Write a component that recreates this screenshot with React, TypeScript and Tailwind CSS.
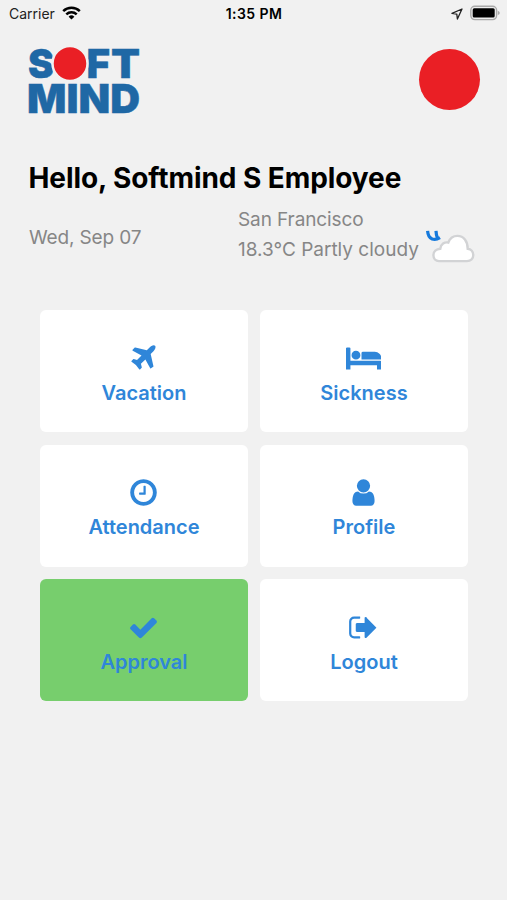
type Tile = {
    label: string;
    icon: string;
    width?: number;
    active?: boolean;
};

// icon outlines are drawn on a 1792 grid, the bed is wider than the others
const tiles: Tile[] = [
    {
        label: "Vacation",
        icon: "M1568 160q44 52 12 148t-108 172l-161 161 160 696q5 19-12 33l-128 96q-7 6-19 6-4 0-7-1-15-3-21-16l-279-508-259 259 53 194q5 17-8 31l-96 96q-9 9-23 9h-2q-15-2-24-13l-189-252-252-189q-11-7-13-23-1-13 9-25l96-97q9-9 23-9 6 0 8 1l194 53 259-259-508-279q-14-8-17-24-2-16 9-27l128-128q14-13 30-8l665 159 160-160q76-76 172-108t148 12z",
    },
    {
        label: "Sickness",
        icon: "M256 1024h1728q26 0 45 19t19 45v448h-256v-256h-1536v256h-256v-1216q0-26 19-45t45-19h128q26 0 45 19t19 45v704zm576-320q0-106-75-181t-181-75-181 75-75 181 75 181 181 75 181-75 75-181zm1216 256v-64q0-159-112.5-271.5t-271.5-112.5h-704q-26 0-45 19t-19 45v384h1152z",
        width: 2048,
    },
    {
        label: "Attendance",
        icon: "M1024 544v448q0 14-9 23t-23 9h-320q-14 0-23-9t-9-23v-64q0-14 9-23t23-9h224v-352q0-14 9-23t23-9h64q14 0 23 9t9 23zm416 352q0-148-73-273t-198-198-273-73-273 73-198 198-73 273 73 273 198 198 273 73 273-73 198-198 73-273zm224 0q0 209-103 385.5t-279.5 279.5-385.5 103-385.5-103-279.5-279.5-103-385.5 103-385.5 279.5-279.5 385.5-103 385.5 103 279.5 279.5 103 385.5z",
    },
    {
        label: "Profile",
        icon: "M1536 1399q0 109-62.5 187t-150.5 78h-854q-88 0-150.5-78t-62.5-187q0-85 8.5-160.5t31.5-152 58.5-131 94-89 134.5-34.5q131 128 313 128t313-128q76 0 134.5 34.5t94 89 58.5 131 31.5 152 8.5 160.5zm-256-887q0 159-112.5 271.5t-271.5 112.5-271.5-112.5-112.5-271.5 112.5-271.5 271.5-112.5 271.5 112.5 112.5 271.5z",
    },
    {
        label: "Approval",
        icon: "M1671 566q0 40-28 68l-724 724-136 136q-28 28-68 28t-68-28l-136-136-362-362q-28-28-28-68t28-68l136-136q28-28 68-28t68 28l294 295 656-657q28-28 68-28t68 28l136 136q28 28 28 68z",
        active: true,
    },
    {
        label: "Logout",
        icon: "M704 1440q0 4 1 20t.5 26.5-3 23.5-10 19.5-20.5 6.5h-320q-119 0-203.5-84.5t-84.5-203.5v-704q0-119 84.5-203.5t203.5-84.5h320q13 0 22.5 9.5t9.5 22.5q0 4 1 20t.5 26.5-3 23.5-10 19.5-20.5 6.5h-320q-66 0-113 47t-47 113v704q0 66 47 113t113 47h312l11.5 1 11.5 3 8 5.5 7 9 2 13.5zm928-544q0 26-19 45l-544 544q-19 19-45 19t-45-19-19-45v-288h-448q-26 0-45-19t-19-45v-384q0-26 19-45t45-19h448v-288q0-26 19-45t45-19 45 19 19 45l544 544q19 19 19 45z",
    },
];

function StatusBar() {
    return (
        <div className="h-7 grid grid-cols-3 items-center pl-[9px] pr-[7px] text-sm text-black">
            <div className="flex items-center gap-[7px]">
                <span className="text-[#222]">Carrier</span>
                <svg className="-mt-[2px]" width="19" height="14" viewBox="0 0 19 14" fill="none" stroke="#000" strokeWidth="2.5">
                    <path d="M1.2 5.2a12 12 0 0 1 16.6 0" />
                    <path d="M4.3 8.4a7.5 7.5 0 0 1 10.4 0" />
                    <path d="M9.5 13.5 6.6 10.7a4.2 4.2 0 0 1 5.8 0z" fill="#000" stroke="none" />
                </svg>
            </div>
            <p className="text-center pr-px font-semibold tracking-[0.45px]">1:35 PM</p>
            <div className="flex items-center justify-end gap-[6px]">
                <svg width="12" height="12" viewBox="0 0 12 12" fill="none" stroke="#222" strokeWidth="1.3" strokeLinejoin="round">
                    <path d="M11 1 1 5.4l4.8.8.6 4.8z" />
                </svg>
                <svg className="-mt-[2px]" width="31" height="16" viewBox="0 0 31 16">
                    <rect x="1.8" y="1.2" width="25.8" height="13.4" rx="4" fill="#eee" stroke="#a9a9a9" strokeWidth="1.4" />
                    <rect x="3.7" y="3.3" width="22" height="9.3" rx="1.5" fill="#000" />
                    <path d="M28.8 5.7q2 .7 2 2.2t-2 2.2z" fill="#a9a9a9" />
                </svg>
            </div>
        </div>
    );
}

function Logo() {
    return (
        <svg
            className="overflow-visible"
            width="112"
            height="68"
            viewBox="0 0 112 68"
            fill="#1f68a5"
            stroke="#1f68a5"
            strokeWidth="0.4"
            fontWeight="900"
            fontSize="40"
        >
            <text x="0" y="31.5" textLength="26" lengthAdjust="spacingAndGlyphs">S</text>
            <text x="58.5" y="31.5" textLength="23.5" lengthAdjust="spacingAndGlyphs">F</text>
            <text x="83" y="31.5" textLength="29" lengthAdjust="spacingAndGlyphs">T</text>
            <text x="-1" y="67" textLength="113" lengthAdjust="spacingAndGlyphs">MIND</text>
            <circle cx="42" cy="17.5" r="17.5" fill="#ea1f25" stroke="#f1f1f1" strokeWidth="2.5" />
        </svg>
    );
}

function WeatherIcon() {
    return (
        <svg width="52" height="36" viewBox="0 0 52 36" fill="none">
            {/* bit of sun behind the cloud */}
            <path d="M3.6.8q.4 6.400 4.600 8.200 3.600 1.200 7.800-1.400M12 .8q.2 4 1.400 7.400" stroke="#1579dc" strokeWidth="3.2" />
            <path
                d="M15 31.100h28c3.800 0 6.300-2.600 6.300-6s-2.300-6-5.600-6.400c0-7.400-4-12.800-10.200-12.800-4.400 0-7.600 2.400-9.200 6.600-3.600-.8-7.600 1.600-8 6.200-4 .4-6.900 2.800-6.900 6.300 0 3.600 2.300 6.100 5.600 6.100z"
                fill="#fff"
                stroke="#d2d3d5"
                strokeWidth="2.4"
            />
        </svg>
    );
}

export default function App() {
    return (
        <div className="min-h-screen bg-[#f1f1f1] font-['Inter',sans-serif]">
            <StatusBar />

            {/* logo and avatar */}
            <div className="flex justify-between pl-7 pr-[27px] pt-[18px]">
                <Logo />
                <div className="w-[61px] h-[61px] mt-[3px] rounded-full bg-[#ea1f25]" />
            </div>

            <h1 className="mt-[46px] ml-[28.5px] leading-9 text-[28px] font-bold tracking-[-0.08px] text-black whitespace-nowrap">
                Hello, Softmind S Employee
            </h1>

            {/* date on the left, weather on the right */}
            <div className="flex items-center h-[60px] mt-[9px] pl-[29px] text-[19px] text-[#868686] whitespace-nowrap">
                <p className="w-[209px] mt-[6px] tracking-[-0.15px]">Wed, Sep 07</p>
                <div className="leading-[30px]">
                    <p className="tracking-[-0.1px]">San Francisco</p>
                    <p>18.3°C Partly cloudy</p>
                </div>
                <div className="ml-[5px] mt-[26px]">
                    <WeatherIcon />
                </div>
            </div>

            {/* menu tiles */}
            <div className="grid grid-cols-2 gap-x-3 gap-y-[12.5px] px-10 mt-[45px] w-[508px]">
                {tiles.map((tile) => (
                    <button
                        key={tile.label}
                        className={`h-[122px] w-[208px] rounded-md flex flex-col items-center text-[#2f86d9] ${tile.active ? "bg-[#77ce6d]" : "bg-white"}`}
                    >
                        <svg className="mt-[32.5px] mr-px h-[31px]" viewBox={`0 0 ${tile.width ?? 1792} 1792`} fill="currentColor">
                            <path d={tile.icon} />
                        </svg>
                        <span className="mt-[5px] text-xl leading-7 font-semibold">{tile.label}</span>
                    </button>
                ))}
            </div>
        </div>
    );
}
